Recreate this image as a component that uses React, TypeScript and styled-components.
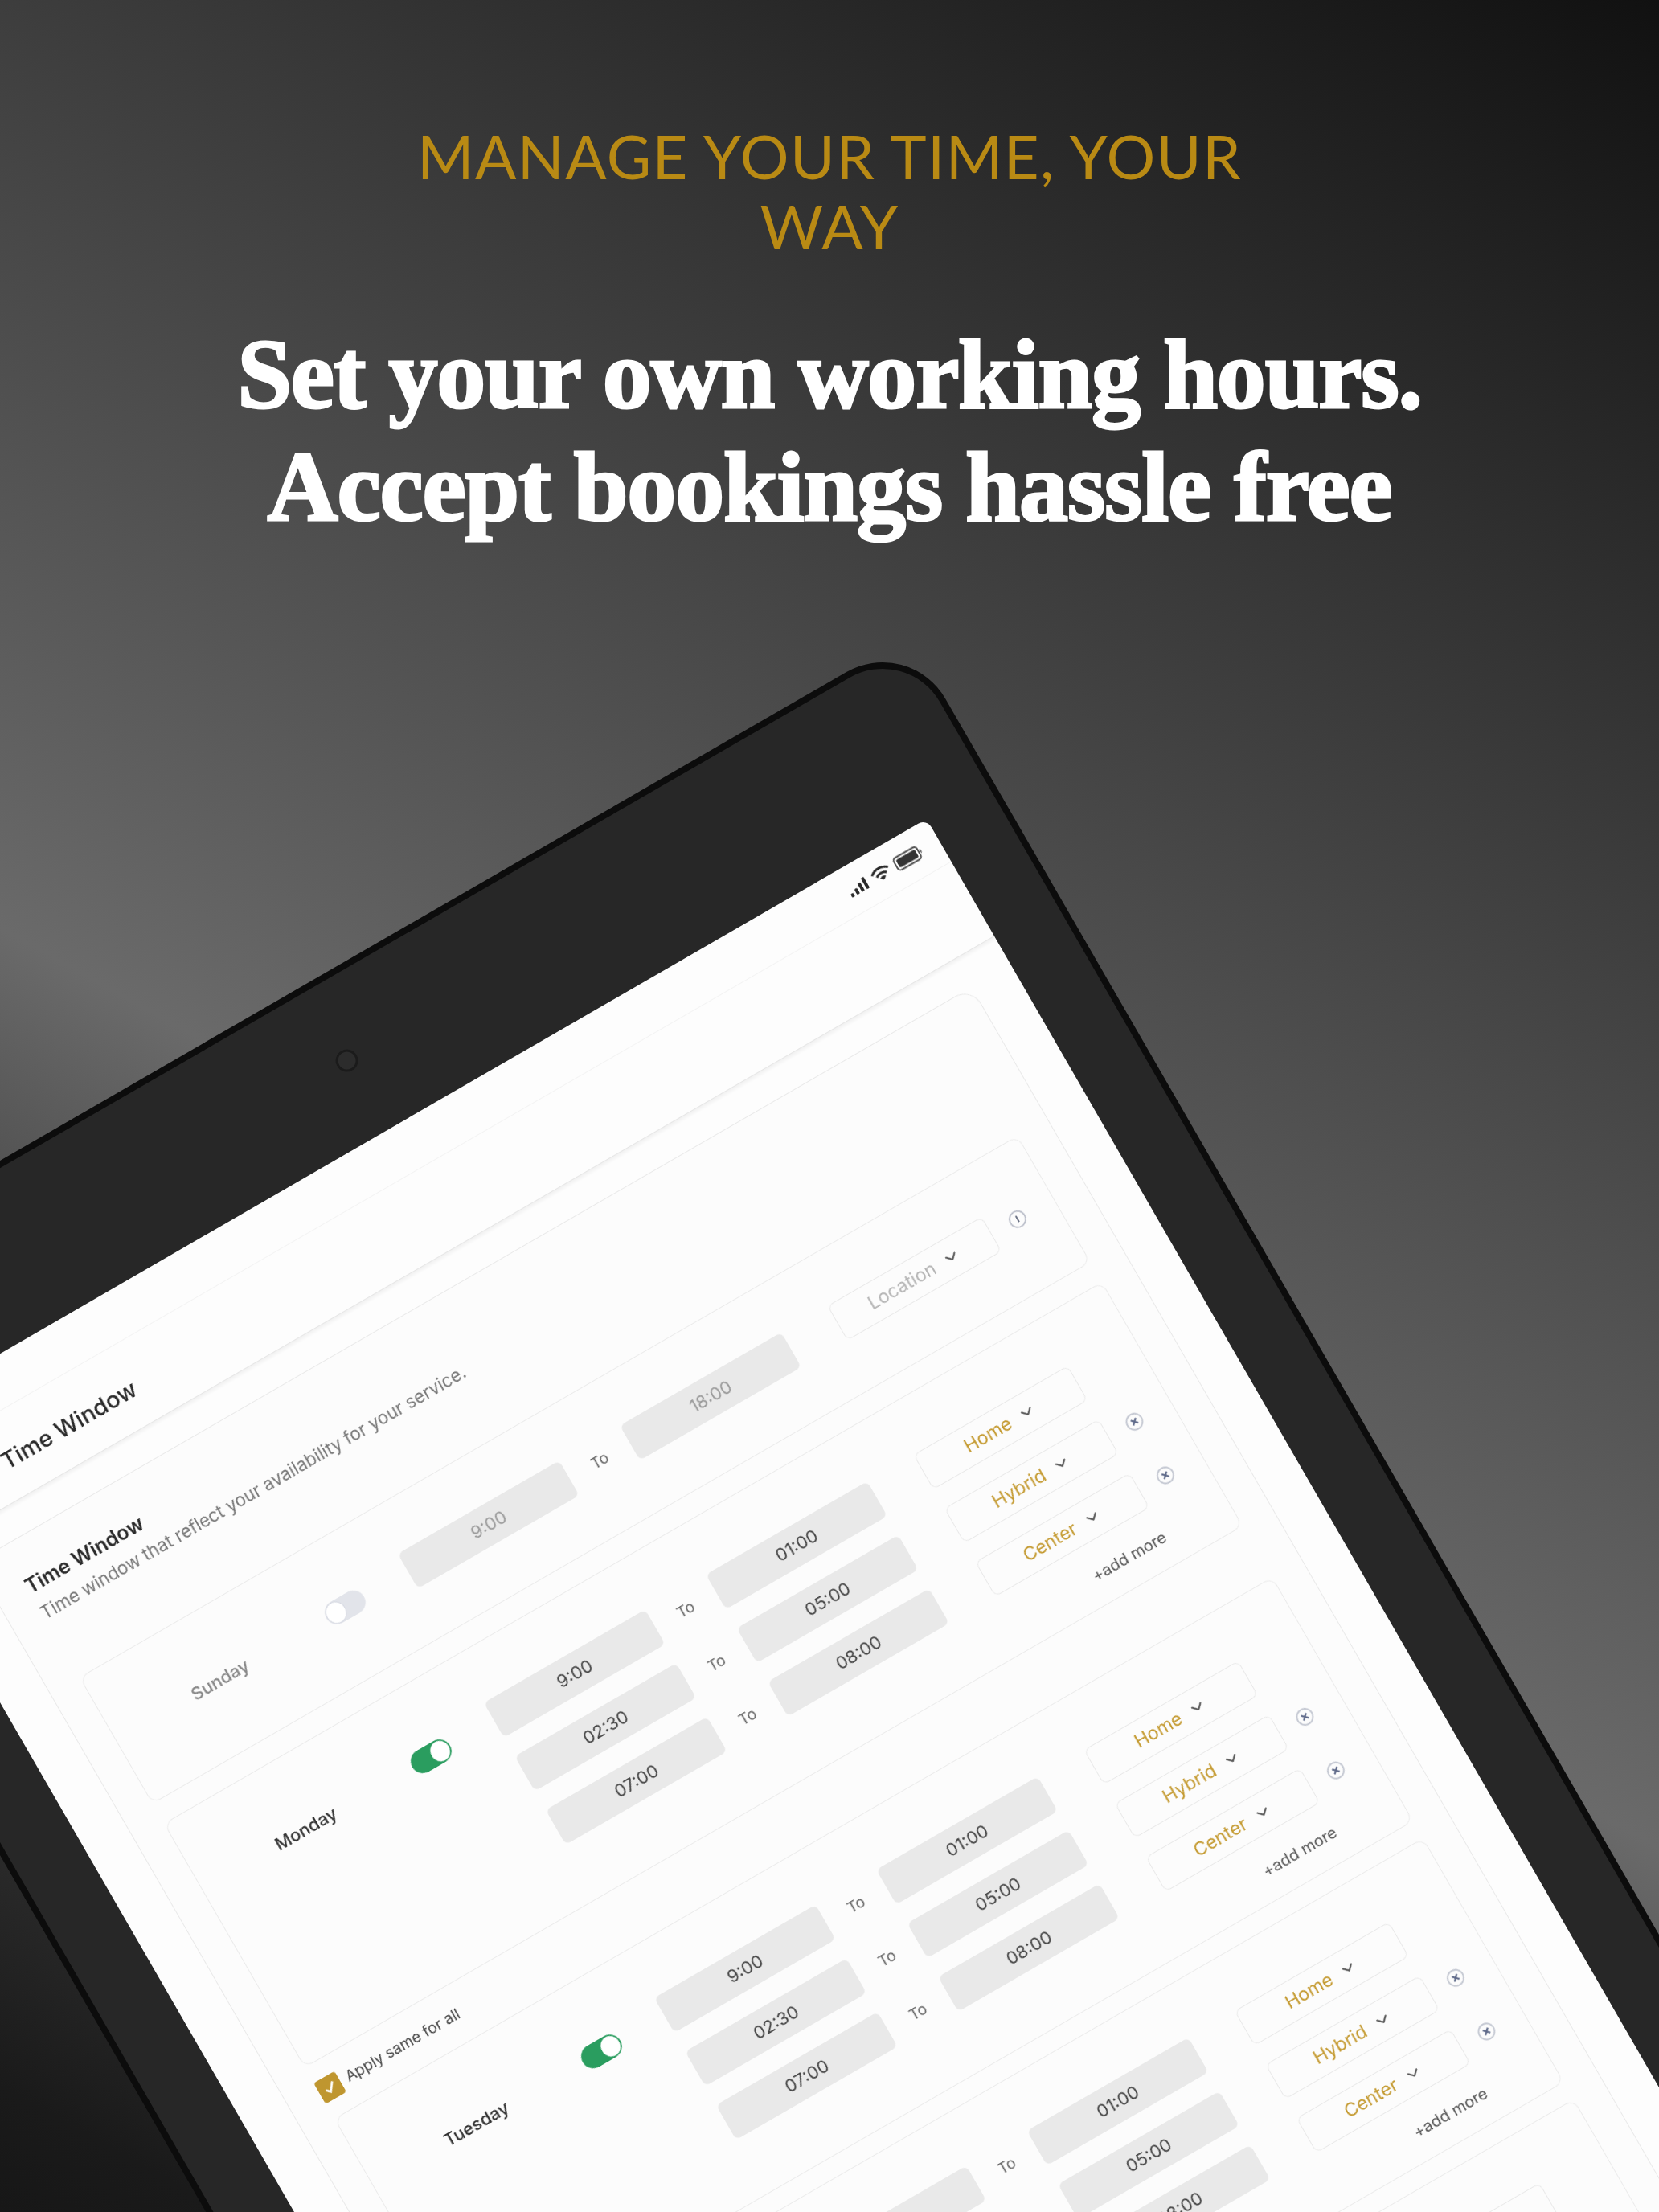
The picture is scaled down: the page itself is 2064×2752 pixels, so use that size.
import { createGlobalStyle } from 'styled-components';
import styled from 'styled-components';
import { ChevronDown, ChevronLeft } from 'lucide-react';

const GlobalStyle = createGlobalStyle`
  html, body {
    margin: 0;
    padding: 0;
    background: #111;
  }
`;

const Page = styled.div`
  position: relative;
  width: 2064px;
  height: 2752px;
  overflow: hidden;
  background: linear-gradient(
    209deg,
    #111111 0%,
    #6a6a6a 59%,
    #555555 66%,
    #2b2b2b 88%,
    #1a1a1a 96%,
    #171717 100%
  );
`;

const Hero = styled.header`
  display: flex;
  flex-direction: column;
  align-items: center;
  padding-top: 150px;
  text-align: center;
`;

const Overline = styled.h2`
  margin: 0;
  max-width: 1100px;
  font-family: 'Lato', 'Liberation Sans', sans-serif;
  font-weight: 400;
  font-size: 76px;
  line-height: 87px;
  letter-spacing: 1.4px;
  color: #b98a14;
`;

const Headline = styled.h1`
  margin: 72px 0 0;
  font-family: 'Liberation Serif', serif;
  font-weight: 700;
  font-size: 122px;
  line-height: 140px;
  letter-spacing: -1.2px;
  color: #fff;
  -webkit-text-stroke: 3px #fff;
`;

/* the whole device lies rotated over the backdrop */
const Tablet = styled.div`
  position: absolute;
  left: -607px;
  top: 791px;
  box-sizing: border-box;
  width: 1738px;
  height: 2500px;
  padding: 200px 87px 0;
  transform-origin: 100% 0;
  transform: rotate(-30deg);
  background: #272727;
  border: 8px solid #0c0c0c;
  border-radius: 90px;
`;

const Camera = styled.span`
  position: absolute;
  top: 86px;
  left: 846px;
  width: 28px;
  height: 28px;
  border-radius: 50%;
  background: #2c2c2c;
  box-shadow: inset 0 0 0 3px #1b1b1b;
`;

const Screen = styled.div`
  height: 2100px;
  background: #fdfdfd;
  border-radius: 12px;
  overflow: hidden;
`;

const ScreenInner = styled.div`
  filter: blur(0.6px);
`;

const StatusBar = styled.div`
  display: flex;
  justify-content: flex-end;
  align-items: center;
  gap: 7px;
  height: 62px;
  padding-right: 23px;
  box-sizing: border-box;
  border-bottom: 1px solid #f3f3f3;
`;

const TopBar = styled.div`
  display: flex;
  align-items: center;
  gap: 4px;
  box-sizing: border-box;
  height: 107px;
  padding: 8px 0 0 114px;
  color: #333;
  border-bottom: 1px solid #e6e6e6;
  box-shadow: 0 3px 4px rgba(0, 0, 0, 0.05);
`;

const PageTitle = styled.span`
  font-family: 'Inter', 'Liberation Sans', sans-serif;
  font-weight: 500;
  font-size: 29px;
  color: #2a2a2a;
`;

const OuterCard = styled.section`
  box-sizing: border-box;
  margin: 40px 56px 0 59px;
  padding: 41px 42px 0 40px;
  background: #fcfcfc;
  border: 1.5px solid #e9e9e9;
  border-radius: 24px;
  min-height: 1900px;
`;

const Heading = styled.h3`
  margin: 0;
  font-family: 'Inter', 'Liberation Sans', sans-serif;
  font-weight: 600;
  font-size: 25px;
  line-height: 36px;
  color: #2a2a2a;
`;

const Subheading = styled.p`
  margin: 5px 0 76px;
  font-family: 'Inter', 'Liberation Sans', sans-serif;
  font-size: 22.2px;
  line-height: 30px;
  color: #777;
`;

const DayList = styled.div`
  display: flex;
  flex-direction: column;
  margin-left: 1px;
`;

const DayCard = styled.article<{ $compact?: boolean; $gap: number }>`
  display: grid;
  grid-template-columns: 298px 121px 1fr;
  box-sizing: border-box;
  margin-bottom: ${(p) => p.$gap}px;
  padding: ${(p) => (p.$compact ? '64px 0 66px' : '68px 0 24px')};
  border: 1.5px solid #ebebeb;
  border-radius: 12px;
`;

const DayName = styled.div<{ $muted?: boolean }>`
  height: 50px;
  font-family: 'Inter', 'Liberation Sans', sans-serif;
  font-weight: 500;
  font-size: 22px;
  line-height: 50px;
  text-align: center;
  color: ${(p) => (p.$muted ? '#888' : '#333')};
`;

const ToggleCell = styled.div`
  display: flex;
  align-items: center;
  height: 50px;
  padding-left: 4px;
`;

const Toggle = styled.span<{ $on?: boolean }>`
  display: flex;
  justify-content: ${(p) => (p.$on ? 'flex-end' : 'flex-start')};
  align-items: center;
  box-sizing: border-box;
  width: 54px;
  height: 30px;
  padding: 2px;
  border-radius: 15px;
  background: ${(p) => (p.$on ? '#2a9d5f' : '#e2e4ea')};
`;

const Knob = styled.span<{ $on?: boolean }>`
  width: 24px;
  height: 26px;
  border-radius: 50%;
  background: #fff;
  box-shadow: ${(p) => (p.$on ? 'none' : '0 0 0 1px #d6d9e2')};
`;

const Slots = styled.div`
  display: flex;
  flex-direction: column;
  gap: 27px;
`;

const SlotRow = styled.div`
  display: grid;
  grid-template-columns: 232px 87px 232px 288px 74px;
  align-items: center;
  height: 50px;
`;

const TimeField = styled.div<{ $muted?: boolean }>`
  height: 50px;
  font-family: 'Inter', 'Liberation Sans', sans-serif;
  font-size: 22px;
  line-height: 50px;
  text-align: center;
  color: ${(p) => (p.$muted ? '#9a9a9a' : '#444')};
  background: #e9e9e9;
  border-radius: 7px;
`;

const ToLabel = styled.span`
  font-family: 'Inter', 'Liberation Sans', sans-serif;
  font-size: 19px;
  text-align: center;
  color: #666;
`;

const Select = styled.div<{ $muted?: boolean }>`
  display: flex;
  justify-content: center;
  align-items: center;
  gap: 12px;
  box-sizing: border-box;
  height: 50px;
  margin-left: 66px;
  font-family: 'Inter', 'Liberation Sans', sans-serif;
  font-size: 23px;
  color: ${(p) => (p.$muted ? '#b4b4b4' : '#c49a30')};
  border: 1.5px solid #e9e9e9;
  border-radius: 8px;

  svg {
    color: #555;
  }
`;

const RowIcon = styled.svg`
  justify-self: center;
  width: 24px;
  height: 24px;
`;

const AddMore = styled.div`
  display: flex;
  justify-content: flex-end;
  width: 838px;
  font-family: 'Inter', 'Liberation Sans', sans-serif;
  font-size: 20px;
  line-height: 26px;
  color: #555;
`;

const ApplyRow = styled.label`
  display: flex;
  align-items: center;
  gap: 9px;
  height: 73px;
  font-family: 'Inter', 'Liberation Sans', sans-serif;
  font-size: 19px;
  color: #444;
`;

const Checkbox = styled.span`
  display: flex;
  justify-content: center;
  align-items: center;
  width: 30px;
  height: 30px;
  border-radius: 4px;
  background: #bf962f;
`;

const SignalIcon = () => (
  <svg width="26" height="18" viewBox="0 0 26 18">
    <rect x="0" y="12" width="4" height="5" rx="1.5" fill="#2a2a2a" />
    <rect x="7" y="9" width="4" height="8" rx="1.5" fill="#2a2a2a" />
    <rect x="14" y="5" width="4" height="12" rx="1.5" fill="#2a2a2a" />
    <rect x="21" y="1" width="4" height="16" rx="1.5" fill="#2a2a2a" />
  </svg>
);

const WifiIcon = () => (
  <svg width="26" height="20" viewBox="0 0 26 20" fill="none" stroke="#2a2a2a" strokeWidth="3">
    <path d="M1.5 7 C8 1 18 1 24.5 7" />
    <path d="M6 11.5 C10 8 16 8 20 11.5" />
    <path d="M13 18 L9.5 14.8 C11.5 13.4 14.5 13.4 16.5 14.8 Z" fill="#2a2a2a" strokeWidth="1" />
  </svg>
);

const BatteryIcon = () => (
  <svg width="40" height="20" viewBox="0 0 40 20" fill="none">
    <rect x="1" y="1.5" width="33" height="17" rx="4" stroke="#444" strokeWidth="1.8" />
    <rect x="4" y="4.5" width="27" height="11" rx="2" fill="#333" />
    <path d="M36 7 C38 7.5 38 12.5 36 13 Z" fill="#555" />
  </svg>
);

const InfoIcon = () => (
  <RowIcon viewBox="0 0 24 24" fill="none">
    <circle cx="12" cy="12" r="10" stroke="#b6bac6" strokeWidth="1.6" />
    <path d="M12 7.5 V16" stroke="#5d6478" strokeWidth="1.8" />
  </RowIcon>
);

const RemoveIcon = () => (
  <RowIcon viewBox="0 0 24 24" fill="none">
    <circle cx="12" cy="12" r="10" stroke="#c4c8d2" strokeWidth="1.8" />
    <path d="M8.5 8.5 L15.5 15.5 M15.5 8.5 L8.5 15.5" stroke="#5d6888" strokeWidth="2.2" />
  </RowIcon>
);

const CheckMark = () => (
  <svg width="20" height="20" viewBox="0 0 18 18" fill="none">
    <path d="M3.5 9.5 L7.5 13.5 L14.5 4" stroke="#fff" strokeWidth="2.4" />
  </svg>
);

const slots = [
  { from: '9:00', to: '01:00', place: 'Home' },
  { from: '02:30', to: '05:00', place: 'Hybrid' },
  { from: '07:00', to: '08:00', place: 'Center' },
];

const days = ['Monday', 'Tuesday', 'Wednesday', 'Thursday'];

export default function App() {
  return (
    <Page>
      <GlobalStyle />
      <Hero>
        <Overline>MANAGE YOUR TIME, YOUR WAY</Overline>
        <Headline>
          Set your own working hours.
          <br />
          Accept bookings hassle free
        </Headline>
      </Hero>

      <Tablet>
        <Camera />
        <Screen>
          <ScreenInner>
            <StatusBar>
              <SignalIcon />
              <WifiIcon />
              <BatteryIcon />
            </StatusBar>
            <TopBar>
              <ChevronLeft size={34} strokeWidth={2} />
              <PageTitle>Time Window</PageTitle>
            </TopBar>
            <OuterCard>
              <Heading>Time Window</Heading>
              <Subheading>Time window that reflect your availability for your service.</Subheading>
              <DayList>
                <DayCard $compact $gap={28}>
                  <DayName $muted>Sunday</DayName>
                  <ToggleCell>
                    <Toggle>
                      <Knob />
                    </Toggle>
                  </ToggleCell>
                  <SlotRow>
                    <TimeField $muted>9:00</TimeField>
                    <ToLabel>To</ToLabel>
                    <TimeField $muted>18:00</TimeField>
                    <Select $muted>
                      Location
                      <ChevronDown size={24} strokeWidth={2} />
                    </Select>
                    <InfoIcon />
                  </SlotRow>
                </DayCard>

                {days.map((day, i) => (
                  <div key={day}>
                    <DayCard $gap={i === 0 ? 0 : 24}>
                      <DayName>{day}</DayName>
                      <ToggleCell>
                        <Toggle $on>
                          <Knob $on />
                        </Toggle>
                      </ToggleCell>
                      <Slots>
                        {slots.map((slot, n) => (
                          <SlotRow key={slot.place}>
                            <TimeField>{slot.from}</TimeField>
                            <ToLabel>To</ToLabel>
                            <TimeField>{slot.to}</TimeField>
                            <Select>
                              {slot.place}
                              <ChevronDown size={24} strokeWidth={2} />
                            </Select>
                            {n > 0 && <RemoveIcon />}
                          </SlotRow>
                        ))}
                        <AddMore>+add more</AddMore>
                      </Slots>
                    </DayCard>
                    {i === 0 && (
                      <ApplyRow>
                        <Checkbox>
                          <CheckMark />
                        </Checkbox>
                        Apply same for all
                      </ApplyRow>
                    )}
                  </div>
                ))}
              </DayList>
            </OuterCard>
          </ScreenInner>
        </Screen>
      </Tablet>
    </Page>
  );
}
